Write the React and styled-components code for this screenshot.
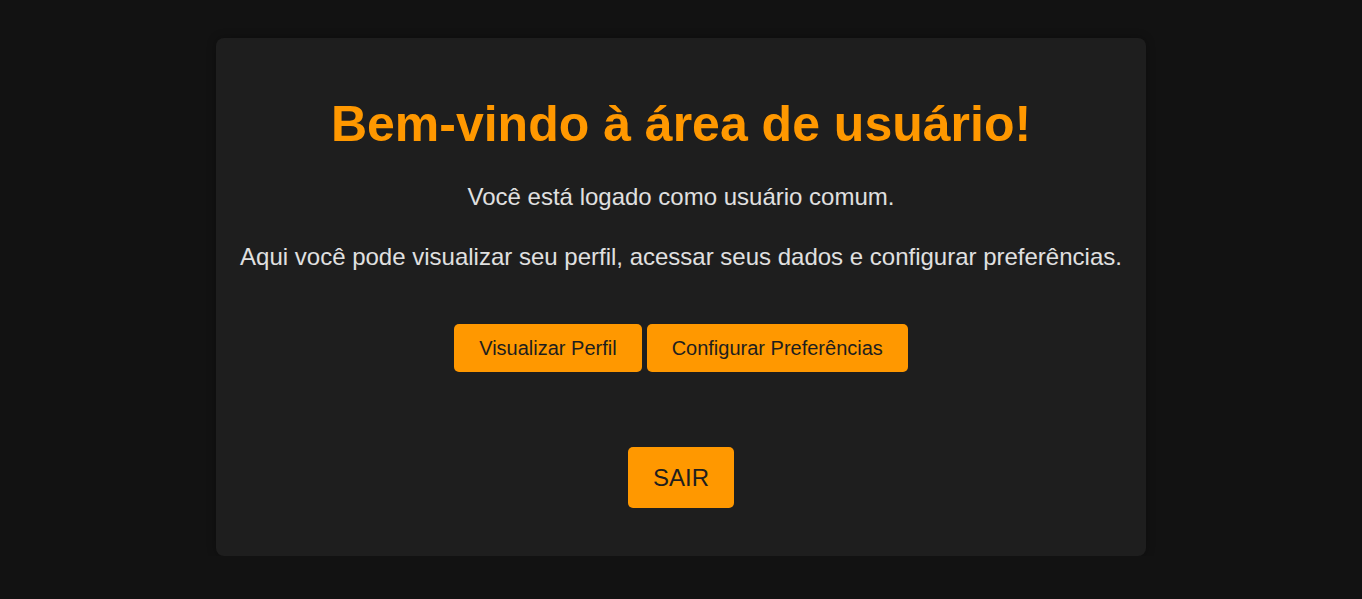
import React from "react";
import styled, { createGlobalStyle } from "styled-components";

const GlobalStyles = createGlobalStyle`
  body {
    margin: 0;
    background: #121212;
    font-family: "Liberation Sans", Arial, sans-serif;
    color: #e0e0e0;
  }
`;

const Page = styled.div`
  display: flex;
  justify-content: center;
  padding-top: 38px;
`;

const Card = styled.div`
  width: 930px;
  height: 518px;
  box-sizing: border-box;
  background: #1e1e1e;
  border-radius: 8px;
  box-shadow: 0 0 10px rgba(0, 0, 0, 0.3);
  display: flex;
  flex-direction: column;
  align-items: center;
  padding-top: 56px;
`;

const Title = styled.h1`
  margin: 0;
  color: #ff9800;
  font-size: 50px;
  font-weight: bold;
  line-height: 60px;
`;

const Text = styled.p`
  margin: ${(p) => p.top}px 0 0;
  font-size: 24px;
  line-height: 28px;
  color: #e0e0e0;
`;

const Actions = styled.div`
  display: flex;
  gap: 5px;
  margin-top: 53px;
`;

const Button = styled.button`
  background: #ff9800;
  color: #1e1e1e;
  border: none;
  border-radius: 5px;
  font-family: "Liberation Sans", Arial, sans-serif;
  font-size: ${(p) => (p.big ? 24 : 20)}px;
  height: ${(p) => (p.big ? 61 : 48)}px;
  padding: 0 25px;
  cursor: pointer;
`;

const Logout = styled.div`
  margin-top: 75px;
`;

export default function App() {
  return (
    <>
      <GlobalStyles />
      <Page>
        <Card>
          <Title>Bem-vindo à área de usuário!</Title>
          <Text top={29}>Você está logado como usuário comum.</Text>
          <Text top={32}>
            Aqui você pode visualizar seu perfil, acessar seus dados e configurar preferências.
          </Text>
          <Actions>
            <Button>Visualizar Perfil</Button>
            <Button>Configurar Preferências</Button>
          </Actions>
          <Logout>
            <Button big>SAIR</Button>
          </Logout>
        </Card>
      </Page>
    </>
  );
}
